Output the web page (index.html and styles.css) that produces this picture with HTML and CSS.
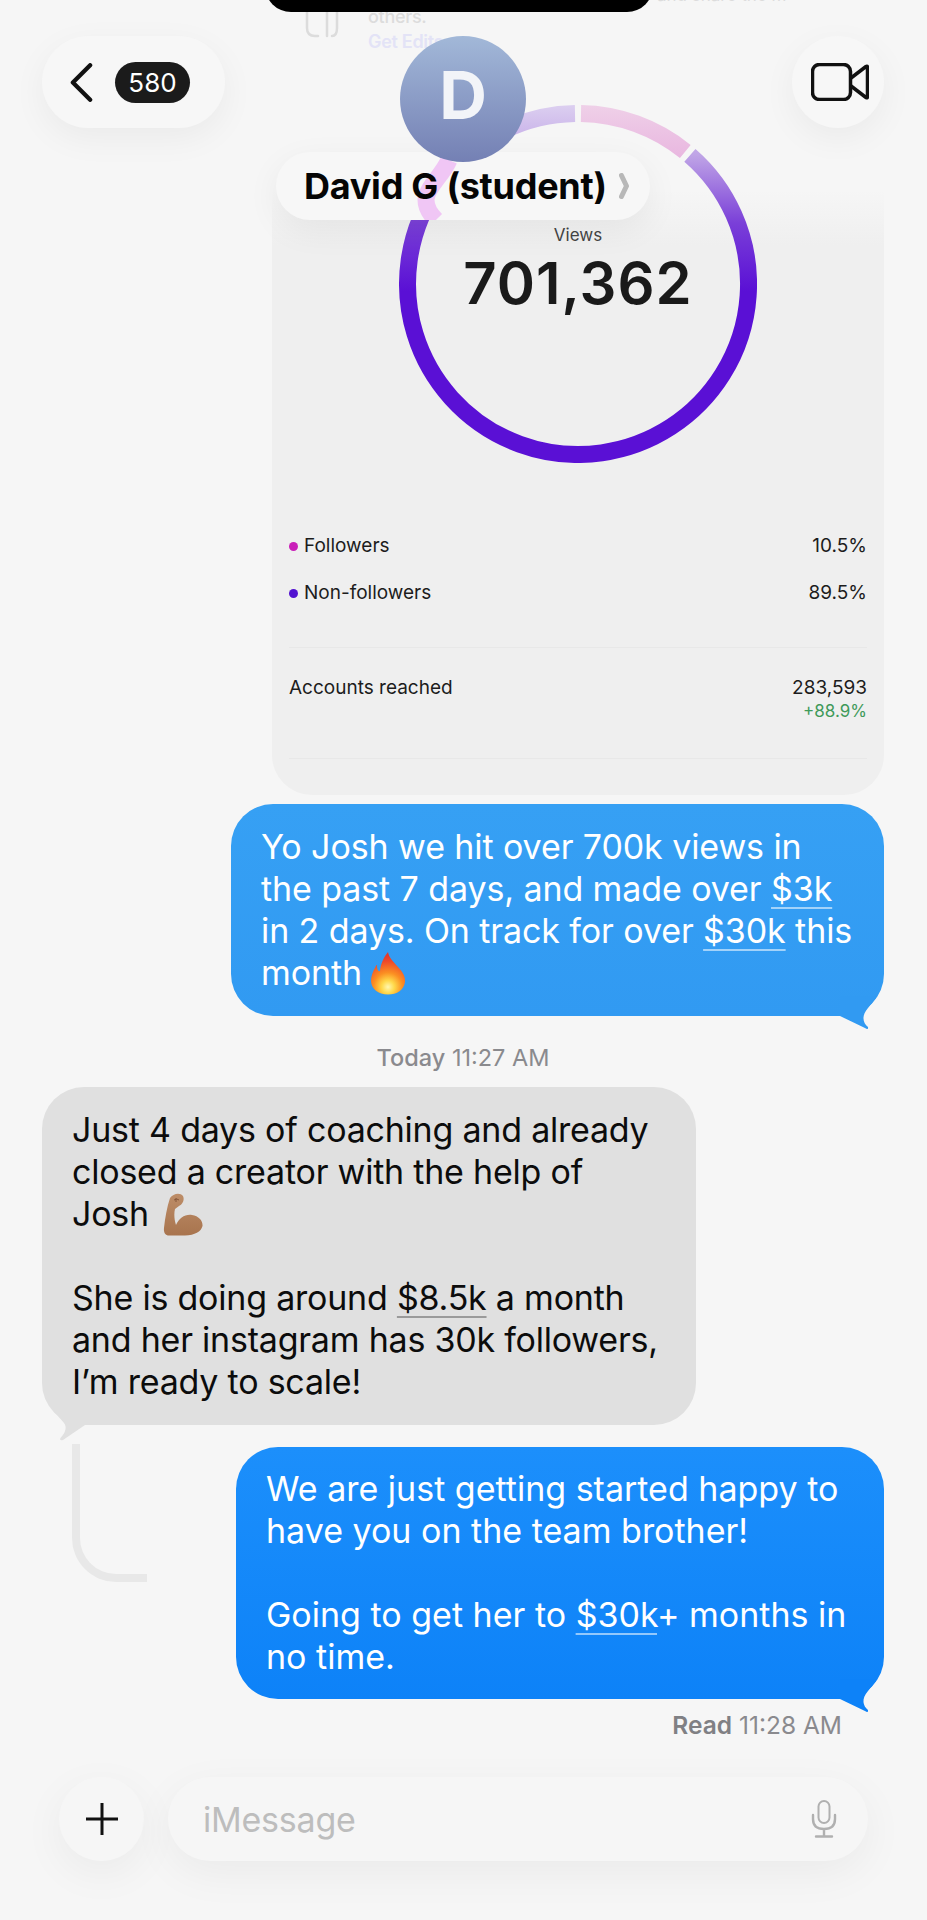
FILE: index.html
```html
<!DOCTYPE html>
<html lang="en">
<head>
<meta charset="utf-8">
<title>Messages</title>
<link rel="stylesheet" href="styles.css">
</head>
<body>
<div class="screen">
  <main class="chat">
    <section class="card">
      <div class="ghost-row">
        <svg class="ghost-icon" viewBox="0 0 34 26"><path d="M2 0v16q0 8 8 8h3M22 0v24M32 0v16q0 8-5 8" fill="none" stroke="#dcdcdc" stroke-width="2.500" stroke-linecap="round"/></svg>
        <div class="ghost-text">
          <div class="ghost-line">others.</div>
          <div class="ghost-link">Get Edits</div>
        </div>
        <div class="ghost-side">and share the m</div>
      </div>
      <div class="ring-wrap">
        <svg class="ring" viewBox="0 0 358 358">
          <defs>
            <linearGradient id="purple" gradientUnits="userSpaceOnUse" x1="0" y1="0" x2="0" y2="358">
              <stop offset="0" stop-color="#dccff0"/>
              <stop offset=".14" stop-color="#bfa4e6"/>
              <stop offset=".33" stop-color="#7a3fd8"/>
              <stop offset=".52" stop-color="#5a10d5"/>
              <stop offset="1" stop-color="#5a10d5"/>
            </linearGradient>
            <linearGradient id="pink" gradientUnits="userSpaceOnUse" x1="0" y1="0" x2="0" y2="50">
              <stop offset="0" stop-color="#efd0e8"/>
              <stop offset="1" stop-color="#e9b8e0"/>
            </linearGradient>
          </defs>
          <path d="M290.900 50.300A170.500 170.500 0 1 1 176 8.500" fill="none" stroke="url(#purple)" stroke-width="17"/>
          <path d="M182 8.500A170.500 170.500 0 0 1 286.300 46.500" fill="none" stroke="url(#pink)" stroke-width="17"/>
        </svg>
        <div class="ring-label">
          <div class="views">Views</div>
          <div class="views-num">701,362</div>
        </div>
      </div>
      <div class="stat-row stat-first"><span class="stat-name"><i class="dot dot-pink"></i>Followers</span><span>10.5%</span></div>
      <div class="stat-row stat-second"><span class="stat-name"><i class="dot dot-purple"></i>Non-followers</span><span>89.5%</span></div>
      <div class="rule rule-one"></div>
      <div class="stat-row stat-reach"><span>Accounts reached</span><span class="reach-vals">283,593<span class="delta">+88.9%</span></span></div>
      <div class="rule rule-two"></div>
    </section>

    <div class="bubble out out-light">
      Yo Josh we hit over 700k views in the past 7 days, and made over <u>$3k</u> in 2 days. On track for over <u>$30k</u> this month<svg class="emoji fire" viewBox="9 7 37 44">
        <defs>
          <radialGradient id="flame" gradientUnits="userSpaceOnUse" cx="28" cy="43" r="32">
            <stop offset="0" stop-color="#fff7b0"/>
            <stop offset=".2" stop-color="#ffd84a"/>
            <stop offset=".45" stop-color="#fb8f22"/>
            <stop offset=".8" stop-color="#ee4a2a"/>
            <stop offset="1" stop-color="#e2382c"/>
          </radialGradient>
        </defs>
        <path d="M28 8C29 14 33 17 38 23C43 28 45.500 33 45 38C44 46 37 50.500 28 50.500C18 50.500 11.500 45 11 37C11 32 13 27 15.500 23C16 21 17 20 17 22C17 25 18 28 20 27C20.500 20 24 13 28 8Z" fill="url(#flame)"/>
      </svg>
      <svg class="tail tail-out" viewBox="0 0 44 36"><path d="M0 20L26 32.500Q28.500 34 28 31C23 27 21 20 28 12L36 2V0H0Z" fill="#319af2"/></svg>
    </div>

    <div class="stamp stamp-today"><b>Today</b> 11:27 AM</div>

    <div class="bubble in">
      Just 4 days of coaching and already closed a creator with the help of<br>
      Josh <svg class="emoji muscle" viewBox="8 8 41 43">
        <defs>
          <linearGradient id="skin" x1="0" y1="0" x2="0" y2="1">
            <stop offset="0" stop-color="#bd8d68"/>
            <stop offset="1" stop-color="#a8744e"/>
          </linearGradient>
        </defs>
        <path d="M15 13C18 8.500 25 7 28 11C30 15 27 20 24 21L20 24C19 28 19 34 21 40C24 33 30 29 37 30C44 31 48 36 47.500 41C46 47 40 50 30 50.500L14 50.500C10 50.500 8.500 47 9 43C10 33 12 22 15 13Z" fill="url(#skin)"/>
        <path d="M19 15q3-2 5 0M21 13v4" fill="none" stroke="#85573a" stroke-width="1"/>
      </svg><br><br>
      She is doing around <u>$8.5k</u> a month and her instagram has 30k followers, I’m ready to scale!
      <svg class="tail tail-in" viewBox="0 0 44 36"><path d="M44 20H35L13 35Q9 36 10.500 33C16 27 17 22 14 18C10 13 6 9 3 5V0H44Z" fill="#e0e0e0"/></svg>
    </div>

    <div class="bubble out out-deep">
      We are just getting started happy to have you on the team brother!<br><br>
      Going to get her to <u>$30k</u>+ months in no time.
      <svg class="tail tail-out" viewBox="0 0 44 36"><path d="M0 20L26 32.500Q28.500 34 28 31C23 27 21 20 28 12L36 2V0H0Z" fill="#0d82f8"/></svg>
    </div>

    <div class="stamp stamp-read"><b>Read</b> 11:28 AM</div>
  </main>

  <div class="notch"></div>

  <header class="topbar">
    <div class="pill back">
      <svg class="back-icon" viewBox="0 0 24 40"><path d="M21 2L3 20l18 18" fill="none" stroke="#111" stroke-width="4.500" stroke-linecap="round" stroke-linejoin="round"/></svg>
      <span class="badge">580</span>
    </div>
    <div class="contact">
      <div class="avatar">D</div>
      <div class="name-pill">
        <svg class="refraction" viewBox="0 0 374 68"><path d="M173 8C166 24 150 36 150 48Q150 58 160 68" fill="none" stroke="#f0c6f5" stroke-width="17"/></svg>
        <span class="name">David G (student)</span>
        <svg class="name-chev" viewBox="0 0 10 26"><path d="M2.500 2.500l5 10.500-5 10.500" fill="none" stroke="#b8b8b8" stroke-width="5" stroke-linecap="round" stroke-linejoin="round"/></svg>
      </div>
    </div>
    <div class="pill video">
      <svg class="video-icon" viewBox="0 0 58 38"><rect x="1.500" y="1.500" width="38" height="35" rx="7" fill="none" stroke="#111" stroke-width="3.500"/><path d="M40 15L55 3.500q1.500-1 1.500 1V33.500q0 2-1.500 1L40 23" fill="none" stroke="#111" stroke-width="3.500" stroke-linejoin="round"/></svg>
    </div>
  </header>

  <footer class="composer">
    <div class="plus">
      <svg class="plus-icon" viewBox="0 0 32 32"><path d="M16 0v32M0 16h32" stroke="#111" stroke-width="3"/></svg>
    </div>
    <div class="input">
      <span class="placeholder">iMessage</span>
      <svg class="mic" viewBox="0 0 26 38"><rect x="7.500" y="1" width="11" height="22" rx="5.500" fill="none" stroke="#b0b0b0" stroke-width="2"/><path d="M2 15v4q0 10 11 10t11-10v-4M13 29v7M5 36.500h16" fill="none" stroke="#b0b0b0" stroke-width="2.400" stroke-linecap="round"/></svg>
    </div>
  </footer>
</div>
</body>
</html>
```

FILE: styles.css
```css
* { box-sizing: border-box; }
html, body { margin: 0; padding: 0; }
body { background: #f6f6f6; font-family: Inter, "Liberation Sans", sans-serif; }

.screen {
  position: relative;
  width: 927px;
  height: 1920px;
  overflow: hidden;
  background: #f6f6f6;
}

.chat {
  display: flex;
  flex-direction: column;
  padding: 0 43px 0 42px;
}

/* Shared Instagram insights card */
.card {
  align-self: flex-end;
  width: 612px;
  height: 795px;
  margin-bottom: 9px;
  padding: 4px 17px 0;
  border-radius: 0 0 40px 40px;
  background: linear-gradient(#f6f6f6 190px, #efefef 245px);
  color: #1c1c1c;
  font-size: 19px;
}
.ghost-row { display: flex; height: 50px; padding-left: 16px; position: relative; }
.ghost-icon { width: 34px; height: 26px; margin-top: 8px; }
.ghost-text { margin-left: 29px; font-size: 18px; line-height: 25px; font-weight: 500; letter-spacing: -0.3px; }
.ghost-line { color: #dcdcdc; }
.ghost-link { color: #e3e3f6; font-weight: 600; }
.ghost-side { position: absolute; top: -21px; left: 368px; color: #dcdcdc; font-size: 17px; line-height: 25px; }

.ring-wrap { display: grid; justify-content: center; margin-top: 51px; }
.ring { grid-area: 1 / 1; width: 358px; height: 358px; display: block; }
.ring-label { grid-area: 1 / 1; text-align: center; padding-top: 119px; }
.views { font-size: 17px; line-height: 22px; color: #444; }
.views-num { font-size: 58px; line-height: 68px; margin-top: 3px; font-weight: 600; color: #1a1a1a; letter-spacing: 1px; }

.stat-row { display: flex; justify-content: space-between; line-height: 26px; }
.stat-first { margin-top: 70px; }
.stat-second { margin-top: 21px; }
.stat-name { display: flex; align-items: center; gap: 6px; }
.dot { width: 9px; height: 9px; border-radius: 50%; }
.dot-pink { background: #c91fb8; }
.dot-purple { background: #5212d0; }
.rule { height: 1px; background: #e8e8e8; }
.rule-one { margin-top: 41px; }
.rule-two { margin-top: 37px; }
.stat-reach { margin-top: 27px; }
.reach-vals { display: flex; flex-direction: column; align-items: flex-end; }
.delta { font-size: 17px; line-height: 20px; color: #3f9a5a; }

/* Message bubbles */
.bubble {
  position: relative;
  padding: 22px 34px 22px 30px;
  border-radius: 42px;
  font-size: 34px;
  line-height: 42px;
  letter-spacing: -0.22px;
}
.bubble u { text-decoration-thickness: 1.5px; text-underline-offset: 6px; text-decoration-color: rgba(255,255,255,.55); }
.out { align-self: flex-end; color: #fff; }
.out-light { width: 653px; padding-right: 25px; letter-spacing: -0.1px; background: linear-gradient(#36a0f4, #319af2); }
.out-deep {
  width: 648px;
  margin-top: 22px;
  padding: 21px 26px 21px 30px;
  letter-spacing: 0;
  background: linear-gradient(#1c8ffb, #0d82f8);
}
.in {
  align-self: flex-start;
  width: 654px;
  margin-top: 14px;
  background: #e0e0e0;
  color: #0c0c0c;
}
.in u { text-decoration-color: #9a9a9a; text-decoration-thickness: 2px; }
.in::after {
  content: "";
  position: absolute;
  left: 30px;
  top: 357px;
  width: 75px;
  height: 138px;
  box-sizing: border-box;
  border-left: 8px solid #e8e8e8;
  border-bottom: 8px solid #e8e8e8;
  border-bottom-left-radius: 44px;
}
.tail { position: absolute; width: 44px; height: 36px; bottom: -16px; }
.tail-out { right: 0; }
.tail-in { left: 8px; }
.emoji { display: inline-block; vertical-align: -5px; margin-block: -11px -5px; }
.fire { width: 37px; height: 44px; margin-left: 7px; }
.muscle { width: 41px; height: 43px; margin-left: 5px; }

.stamp { line-height: 30px; color: #8a8a8e; }
.stamp b { font-weight: 500; }
.stamp-today { align-self: center; margin-top: 27px; font-size: 23.500px; }
.stamp-read { align-self: flex-end; margin: 11px 42px 0 0; font-size: 24.500px; }
.stamp-read b { font-weight: 600; color: #808084; }

/* Status bar cut-out */
.notch {
  position: absolute;
  top: -30px;
  left: 265px;
  width: 388px;
  height: 42px;
  border-radius: 0 0 26px 26px;
  background: #000;
}

/* Floating header */
.topbar {
  position: absolute;
  top: 36px;
  left: 42px;
  right: 43px;
  display: flex;
  justify-content: space-between;
  align-items: flex-start;
}
.pill {
  height: 92px;
  display: flex;
  align-items: center;
  background: #f7f7f7;
  border-radius: 46px;
  box-shadow: 0 10px 34px rgba(0,0,0,.05);
}
.back { width: 183px; padding-left: 28px; gap: 22px; }
.back-icon { width: 23px; height: 39px; }
.badge {
  width: 75px;
  height: 41px;
  border-radius: 21px;
  background: #1b1b1b;
  color: #fff;
  font-size: 26px;
  line-height: 41px;
  text-align: center;
}
.video { width: 92px; justify-content: center; }
.video-icon { width: 58px; height: 38px; margin-left: 3px; }

.contact {
  position: absolute;
  top: 0;
  left: 234px;
  width: 374px;
  display: flex;
  flex-direction: column;
  align-items: center;
}
.avatar {
  position: relative;
  z-index: 1;
  width: 126px;
  height: 126px;
  margin-bottom: -10px;
  border-radius: 50%;
  background: linear-gradient(#a2b8d8, #7480b4);
  color: #f2f4f8;
  font-size: 66px;
  font-weight: 700;
  line-height: 118px;
  text-align: center;
}
.name-pill {
  position: relative;
  width: 374px;
  height: 68px;
  padding-left: 28px;
  display: flex;
  align-items: center;
  gap: 12px;
  border-radius: 34px;
  background: #f7f7f7;
  box-shadow: 0 10px 34px rgba(0,0,0,.06);
  overflow: hidden;
}
.refraction { position: absolute; inset: 0; width: 374px; height: 68px; }
.name { position: relative; font-size: 36px; font-weight: 700; color: #050505; letter-spacing: -0.25px; white-space: nowrap; }
.name-chev { position: relative; width: 10px; height: 26px; flex: none; }

/* Composer */
.composer {
  position: absolute;
  left: 59px;
  right: 59px;
  bottom: 59px;
  display: flex;
  gap: 24px;
}
.plus, .input {
  height: 84px;
  background: #f6f6f6;
  border-radius: 42px;
  box-shadow: 0 12px 44px rgba(0,0,0,.05);
  display: flex;
  align-items: center;
}
.plus { width: 85px; justify-content: center; }
.plus-icon { width: 32px; height: 32px; }
.input { flex: 1; padding: 0 31px 0 35px; justify-content: space-between; }
.placeholder { font-size: 34px; color: #bdbdbd; letter-spacing: -0.22px; }
.mic { width: 26px; height: 38px; }
```
